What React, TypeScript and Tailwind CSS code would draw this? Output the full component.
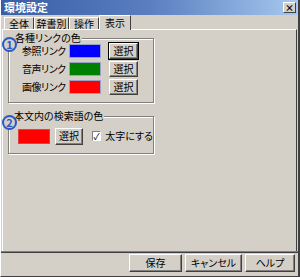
import React from "react";

const font = {
  fontFamily: '"Noto Sans CJK JP", "Liberation Sans", sans-serif',
  fontFeatureSettings: '"palt"',
};

function WinButton({ label, className = "" }: { label: string; className?: string }) {
  return (
    <button
      className={`flex items-center justify-center whitespace-nowrap bg-[#d4d0c8] border border-t-white border-l-white border-r-[#404040] border-b-[#404040] shadow-[inset_-1px_-1px_0_#808080] text-[10px] leading-none text-black ${className}`}
    >
      {label}
    </button>
  );
}

function Swatch({ color, className = "" }: { color: string; className?: string }) {
  return <div className={`h-[14px] w-[32px] flex-none border border-[#9aa0c8] ${className}`} style={{ backgroundColor: color }} />;
}

function Circled({ n }: { n: string }) {
  return (
    <div className="absolute -left-[6px] -top-[1px] z-10 flex h-[15px] w-[15px] items-center justify-center rounded-full border-2 border-[#2a58c8] text-[11px] font-bold leading-none text-[#2a58c8] bg-[#d4d0c8]">
      {n}
    </div>
  );
}

const links = [
  { label: "参照リンク", color: "#0000ff", focus: true },
  { label: "音声リンク", color: "#008000", focus: false },
  { label: "画像リンク", color: "#ff0000", focus: false },
];

const tabs = ["全体", "辞書別", "操作", "表示"];

export default function App() {
  return (
    <div
      className="flex h-[277px] w-[300px] flex-col bg-[#d4d0c8] border-l border-l-white border-r-2 border-r-[#404040] border-b border-b-[#404040] text-black whitespace-nowrap"
      style={font}
    >
      <div className="flex h-[15px] items-center justify-between bg-gradient-to-r from-[#3a5ea6] via-[#5a7ec0] to-[#a8c8ee] pl-[3px] pr-[2px]">
        <span className="text-[11px] font-bold leading-none text-white">環境設定</span>
        <div className="flex h-[11px] w-[13px] items-center justify-center bg-[#d4d0c8] border border-t-white border-l-white border-r-[#404040] border-b-[#404040] text-[9px] font-bold leading-none">
          ×
        </div>
      </div>

      <div className="flex h-[14px] items-end pl-[3px]">
        {tabs.map((t, i) => {
          const active = i === tabs.length - 1;
          return (
            <div
              key={t}
              className={`flex items-center justify-center border-l border-t border-r border-l-white border-t-white border-r-[#404040] text-[10px] leading-none ${
                active ? "relative z-10 -mb-px h-[15px] w-[32px] bg-[#d4d0c8]" : t === "辞書別" ? "h-[12px] w-[35px]" : "h-[12px] w-[30px]"
              }`}
            >
              {t}
            </div>
          );
        })}
      </div>

      <div className="mx-[1px] flex h-[222px] flex-col border-l border-t border-r border-l-white border-t-white border-r-[#404040] pr-[1px] pl-[5px] pt-[2px]">
        <div className="relative mt-[6px] w-[146px]">
          <Circled n="1" />
          <div className="h-[65px] border border-[#808080] shadow-[1px_1px_0_white,inset_1px_1px_0_white] pt-[4px] pl-[13px]">
            <div className="absolute -top-[6px] left-[6px] bg-[#d4d0c8] px-[1px] text-[10px] leading-[11px]">各種リンクの色</div>
            <div className="flex flex-col gap-[2px]">
              {links.map((l) => (
                <div key={l.label} className="flex h-[16px] items-center">
                  <span className="w-[47px] flex-none text-[10px] leading-none tracking-[-0.5px]">{l.label}</span>
                  <Swatch color={l.color} />
                  <WinButton
                    label="選択"
                    className={`ml-[8px] h-[16px] w-[29px] ${l.focus ? "outline outline-1 outline-black" : ""}`}
                  />
                </div>
              ))}
            </div>
          </div>
        </div>

        <div className="relative mt-[13px] w-[146px]">
          <Circled n="2" />
          <div className="h-[38px] border border-[#808080] shadow-[1px_1px_0_white,inset_1px_1px_0_white] flex items-center pl-[9px] pt-[2px]">
            <div className="absolute -top-[6px] left-[5px] bg-[#d4d0c8] px-[1px] text-[10px] leading-[11px]">本文内の検索語の色</div>
            <Swatch color="#ff0000" className="h-[15px] w-[31px] border-[#e04040]" />
            <WinButton label="選択" className="ml-[5px] h-[17px] w-[31px]" />
            <div className="ml-[9px] flex h-[10px] w-[10px] items-center justify-center bg-white border border-t-[#808080] border-l-[#808080] border-r-white border-b-white text-[9px] leading-none">
              ✓
            </div>
            <span className="ml-[4px] text-[10px] leading-none">太字にする</span>
          </div>
        </div>
      </div>

      <div className="h-[2px] border-t border-t-[#808080] border-b border-b-[#404040]" />

      <div className="flex flex-1 items-start justify-end gap-[3px] pr-[3px] pt-[1px]">
        <WinButton label="保存" className="h-[18px] w-[53px]" />
        <WinButton label="キャンセル" className="h-[18px] w-[57px]" />
        <WinButton label="ヘルプ" className="h-[18px] w-[50px]" />
      </div>
    </div>
  );
}
